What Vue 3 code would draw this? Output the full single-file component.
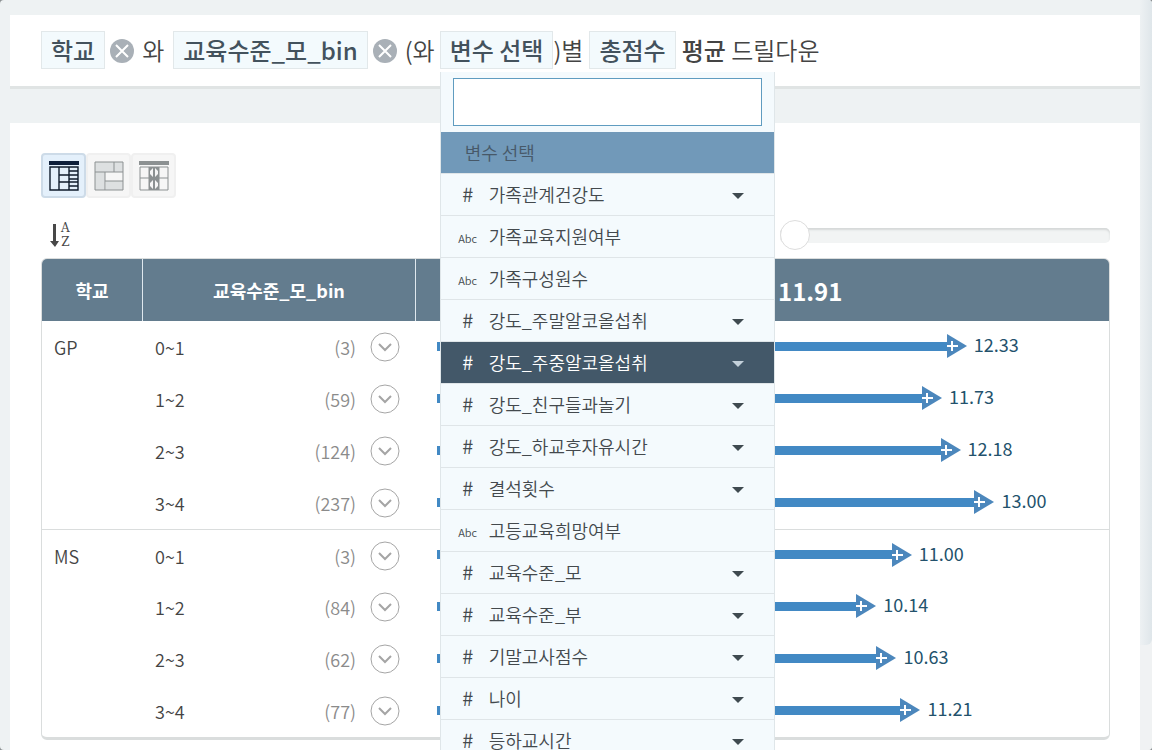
<template>
  <div class="page">
    <main class="content">
      <section class="query-bar">
        <button class="token" type="button">학교</button>
        <button class="remove" type="button" aria-label="학교 삭제">
          <svg viewBox="0 0 24 24"><circle cx="12" cy="12" r="12" /><path d="M6 6l12 12M18 6L6 18" /></svg>
        </button>
        <span class="word and">와</span>
        <button class="token" type="button">교육수준_모_bin</button>
        <button class="remove" type="button" aria-label="교육수준_모_bin 삭제">
          <svg viewBox="0 0 24 24"><circle cx="12" cy="12" r="12" /><path d="M6 6l12 12M18 6L6 18" /></svg>
        </button>
        <span class="word open">(와</span>
        <div class="picker">
          <button class="token" type="button" aria-expanded="true">변수 선택</button>
          <div class="dropdown">
            <div class="search">
              <input v-model="keyword" type="text" aria-label="변수 선택" />
            </div>
            <ul class="options">
              <li class="option placeholder">변수 선택</li>
              <li
                v-for="item in filtered"
                :key="item.name"
                class="option"
                :class="{ active: item.name === active }"
                @mouseenter="active = item.name"
              >
                <span class="type" :class="{ abc: !item.numeric }">{{ item.numeric ? '#' : 'Abc' }}</span>
                <span class="name">{{ item.name }}</span>
                <span v-if="item.expandable" class="caret"></span>
              </li>
            </ul>
          </div>
        </div>
        <span class="word">)별</span>
        <button class="token target" type="button">총점수</button>
        <span class="word"><strong>평균</strong> 드릴다운</span>
      </section>

      <section class="panel">
        <div class="views">
          <button class="view selected" type="button" aria-label="표">
            <svg viewBox="0 0 30 30">
              <path class="fill" d="M0 0h30v4H0z" />
              <path d="M1 6h28v23H1zM10 6v23M20 6v23M10 14h10M10 21h10M20 10h9M20 14h9M20 18h9M20 21h9M20 25h9" />
            </svg>
          </button>
          <button class="view" type="button" aria-label="트리맵">
            <svg viewBox="0 0 30 30">
              <path class="shade" d="M1 1h19v10H1zM1 11h10v18H1zM12 20h17v9H12zM20 1h9v10h-9z" />
              <path d="M1 1h28v28H1zM1 11h28M20 1v10M11 11v18M11 20h18" />
            </svg>
          </button>
          <button class="view" type="button" aria-label="분포">
            <svg viewBox="0 0 30 30">
              <path class="fill" d="M0 0h30v4H0z" />
              <path class="fill" d="M10 6h10v23H10z" />
              <path d="M1 6h28v23H1zM1 17h28M10 6v23M20 6v23" />
              <path class="hole" d="M14 7v9l-3-3V10zM16 7v9l3-3V10zM14 19v9l-3-3v-3zM16 19v9l3-3v-3z" />
            </svg>
          </button>
        </div>

        <div class="tools">
          <button class="sort" type="button" aria-label="정렬">
            <svg viewBox="0 0 12 26">
              <path d="M4 2h3v17h3l-4 6-5-6h3z" />
            </svg>
            <span class="letters"><span>A</span><span>Z</span></span>
          </button>
          <input v-model="depth" class="slider" type="range" min="0" max="100" aria-label="범위" />
        </div>

        <table class="result">
          <colgroup>
            <col class="col-school" />
            <col class="col-level" />
            <col />
          </colgroup>
          <thead>
            <tr>
              <th>학교</th>
              <th>교육수준_모_bin</th>
              <th class="total">11.91</th>
            </tr>
          </thead>
          <tbody v-for="group in groups" :key="group.school">
            <tr v-for="(row, i) in group.rows" :key="row.level">
              <td class="school">{{ i === 0 ? group.school : '' }}</td>
              <td>
                <div class="level">
                  <span>{{ row.level }}</span>
                  <span class="count">({{ row.count }})</span>
                  <button class="expand" type="button" :aria-label="row.level + ' 펼치기'">
                    <svg viewBox="0 0 30 30"><circle cx="15" cy="15" r="14" /><path d="M9 12l6 6 6-6" /></svg>
                  </button>
                </div>
              </td>
              <td>
                <div class="chart">
                  <div class="bar" :style="{ width: barWidth(row.value) }">
                    <span class="line"></span>
                    <svg class="tip" viewBox="0 0 20 24">
                      <path class="head" d="M0 0l20 12L0 24z" />
                      <path class="plus" d="M0 12h11M5 7v10" />
                    </svg>
                  </div>
                  <span class="value">{{ row.value.toFixed(2) }}</span>
                </div>
              </td>
            </tr>
          </tbody>
        </table>
      </section>
    </main>
    <div class="scrollbar"><div class="thumb"></div></div>
  </div>
</template>

<script setup>
import { computed, ref } from 'vue'

const keyword = ref('')
const active = ref('강도_주중알코올섭취')
const depth = ref(0)

const variables = [
  { name: '가족관계건강도', numeric: true, expandable: true },
  { name: '가족교육지원여부', numeric: false },
  { name: '가족구성원수', numeric: false },
  { name: '강도_주말알코올섭취', numeric: true, expandable: true },
  { name: '강도_주중알코올섭취', numeric: true, expandable: true },
  { name: '강도_친구들과놀기', numeric: true, expandable: true },
  { name: '강도_하교후자유시간', numeric: true, expandable: true },
  { name: '결석횟수', numeric: true, expandable: true },
  { name: '고등교육희망여부', numeric: false },
  { name: '교육수준_모', numeric: true, expandable: true },
  { name: '교육수준_부', numeric: true, expandable: true },
  { name: '기말고사점수', numeric: true, expandable: true },
  { name: '나이', numeric: true, expandable: true },
  { name: '등하교시간', numeric: true, expandable: true }
]

const filtered = computed(() => variables.filter(item => item.name.includes(keyword.value)))

const groups = [
  {
    school: 'GP',
    rows: [
      { level: '0~1', count: 3, value: 12.33 },
      { level: '1~2', count: 59, value: 11.73 },
      { level: '2~3', count: 124, value: 12.18 },
      { level: '3~4', count: 237, value: 13 }
    ]
  },
  {
    school: 'MS',
    rows: [
      { level: '0~1', count: 3, value: 11 },
      { level: '1~2', count: 84, value: 10.14 },
      { level: '2~3', count: 62, value: 10.63 },
      { level: '3~4', count: 77, value: 11.21 }
    ]
  }
]

const barWidth = value => `${(3 + value * 6.15).toFixed(2)}%`
</script>

<style>
html {
  background: #8b9092;
}

body {
  margin: 0;
}
</style>

<style scoped>
.page {
  display: flex;
  height: 100vh;
  overflow: hidden;
  border-radius: 4px;
  background: #eef2f3;
  color: #444444;
  font-family: "Noto Sans CJK KR", sans-serif;
  font-weight: 350;
}

.page * {
  box-sizing: border-box;
}

button {
  margin: 0;
  padding: 0;
  border: 0;
  background: none;
  color: inherit;
  font: inherit;
  cursor: pointer;
}

svg {
  display: block;
}

.content {
  flex: 1;
  display: flex;
  flex-direction: column;
  gap: 34px;
  padding: 15px 0 0 10px;
}

.query-bar {
  display: flex;
  align-items: center;
  padding: 16px 31px 17px;
  border-bottom: 3px solid #e0e4e4;
  background: #ffffff;
  font-size: 24px;
  line-height: 36px;
  white-space: nowrap;
}

.token {
  display: block;
  height: 38px;
  padding: 0 9px;
  border: 1px solid #e2e8ea;
  background: #f3fafd;
  color: #43525d;
  font-weight: 500;
  line-height: 34px;
}

.remove {
  margin: 2px 8px 0 5px;
}

.remove svg {
  width: 24px;
  height: 24px;
}

.remove circle {
  fill: #a9b0b7;
}

.remove path {
  stroke: #ffffff;
  stroke-width: 2;
}

.and {
  margin-right: 9px;
}

.open {
  margin-right: 5px;
}

.target {
  margin: 0 6px;
}

.word {
  line-height: 34px;
}

.word strong {
  font-weight: 500;
}

.picker {
  position: relative;
}

.dropdown {
  position: absolute;
  z-index: 2;
  top: 41px;
  left: 0;
  width: 335px;
  border: 1px solid #dfe6e9;
  border-top: 0;
  background: #f4fafd;
  font-size: 18px;
}

.search {
  padding: 6px 12px;
}

.search input {
  display: block;
  width: 100%;
  height: 48px;
  padding: 0 12px;
  border: 1px solid #5f9cc0;
  background: #ffffff;
  font: inherit;
  outline: 0;
}

.options {
  margin: 0;
  padding: 0;
  list-style: none;
}

.option {
  display: flex;
  align-items: center;
  height: 42px;
  padding: 0 30px 2px 14px;
  border-bottom: 1px solid #dfe5e8;
  color: #43494d;
  line-height: 24px;
}

.placeholder {
  padding-left: 24px;
  background: #7199b9;
  color: #475868;
}

.active {
  background: #435869;
  color: #ffffff;
}

.type {
  width: 26px;
  margin-right: 8px;
  font-size: 20px;
  text-align: center;
}

.abc {
  padding-top: 4px;
  font-size: 11px;
}

.name {
  flex: 1;
}

.caret {
  margin-top: 4px;
  border: 6px solid transparent;
  border-top-color: #3f4a50;
  border-bottom: 0;
}

.active .caret {
  border-top-color: #c3d0da;
}

.panel {
  flex: 1;
  padding: 30px 30px 0 31px;
  background: #ffffff;
}

.views {
  display: flex;
}

.view {
  display: flex;
  align-items: center;
  justify-content: center;
  width: 45px;
  height: 45px;
  border: 2px solid #f0f0f0;
  border-radius: 4px;
  background: #f6f6f6;
}

.view svg {
  width: 30px;
  height: 30px;
  fill: none;
  stroke: #8c9192;
}

.view .fill {
  fill: #8c9192;
  stroke: none;
}

.view .shade {
  fill: #dde0e1;
  stroke: none;
}

.view .hole {
  fill: #f6f6f6;
  stroke: none;
}

.view.selected {
  border-color: #cddbe8;
  background: #e4f0fb;
}

.view.selected svg {
  stroke: #0e1a2b;
  stroke-width: 1.4;
}

.view.selected .fill {
  fill: #0e1f3a;
}

.tools {
  display: flex;
  align-items: center;
  justify-content: space-between;
  height: 32px;
  margin: 21px 0 7px;
}

.sort {
  display: flex;
  align-items: center;
  padding-left: 8px;
  color: #484848;
}

.sort svg {
  width: 12px;
  height: 26px;
  fill: #484848;
}

.letters {
  display: flex;
  flex-direction: column;
  font-family: "DejaVu Serif", serif;
  font-size: 12px;
  font-weight: 400;
  line-height: 14px;
}

.slider {
  width: 330px;
  height: 30px;
  margin: 0;
  appearance: none;
  background: none;
}

.slider::-webkit-slider-runnable-track {
  height: 15px;
  border-radius: 5px;
  background: #f2f4f4;
  box-shadow: inset 0 2px 2px #d5d8d8;
}

.slider::-webkit-slider-thumb {
  appearance: none;
  width: 30px;
  height: 30px;
  margin-top: -8px;
  border: 1px solid #dddddd;
  border-radius: 50%;
  background: #ffffff;
}

.result {
  width: 100%;
  border: 1px solid #dadddd;
  border-bottom-width: 3px;
  border-radius: 6px;
  border-spacing: 0;
  table-layout: fixed;
  overflow: hidden;
  font-size: 18px;
  line-height: 26px;
}

.col-school {
  width: 101px;
}

.col-level {
  width: 273px;
}

th {
  height: 62px;
  padding: 0;
  border-right: 1px solid #dfe8ee;
  background: #637c8e;
  color: #ffffff;
  font-weight: 700;
}

th.total {
  padding: 2px 0 0 362px;
  border-right: 0;
  font-size: 24px;
  text-align: left;
}

td {
  height: 52px;
  padding: 0;
}

tbody + tbody tr:first-child td {
  border-top: 1px solid #dadddd;
}

.school {
  padding-left: 12px;
}

.level {
  display: flex;
  align-items: center;
  padding: 0 16px 0 12px;
}

.count {
  flex: 1;
  color: #8b8b8b;
  text-align: right;
}

.expand {
  margin-left: 14px;
}

.expand svg {
  width: 30px;
  height: 30px;
  fill: none;
  stroke: #a5a5a5;
}

.expand path {
  stroke-width: 2;
}

.chart {
  display: flex;
  align-items: center;
  padding: 0 0 2px 21px;
}

.bar {
  display: flex;
  align-items: center;
}

.line {
  flex: 1;
  height: 9px;
  background: #4289c4;
}

.tip {
  width: 20px;
  height: 24px;
}

.head {
  fill: #4c87bc;
}

.plus {
  fill: none;
  stroke: #ffffff;
  stroke-width: 2;
}

.value {
  padding-bottom: 4px;
  margin-left: 7px;
  color: #23526c;
  font-weight: 400;
}

.scrollbar {
  width: 12px;
  background: #f0f2f3;
}

.thumb {
  height: 86%;
  border-radius: 0 0 6px 0;
  background: linear-gradient(to right, #edf1f3, #dfe6ea);
}
</style>
